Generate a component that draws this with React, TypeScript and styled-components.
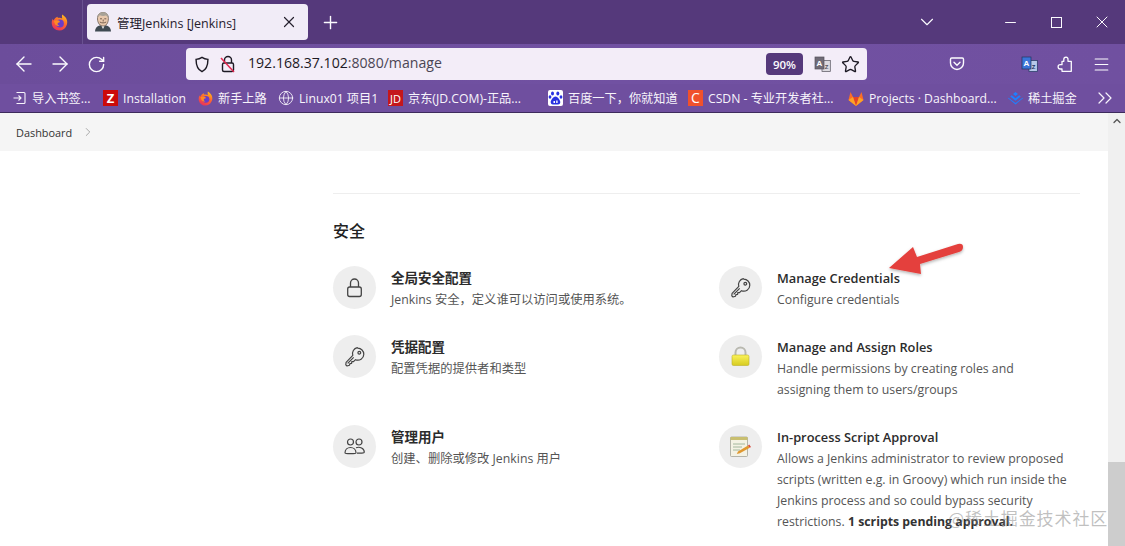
import React from "react";
import styled, { createGlobalStyle } from "styled-components";
import { ArrowLeft, ArrowRight, RotateCw, Plus, X, ChevronDown, ChevronRight, ChevronUp, ChevronsRight, Minus, Star, Menu, Globe } from "lucide-react";

const Global = createGlobalStyle`
  html, body { margin: 0; padding: 0; width: 1125px; height: 546px; overflow: hidden; background: #fff; }
  body { font-family: "Open Sans", "Noto Sans CJK SC", sans-serif; }
  * { box-sizing: border-box; }
`;

const Page = styled.div`
  position: relative; width: 1125px; height: 546px; overflow: hidden;
  display: flex; flex-direction: column;
`;

const TabStrip = styled.div`
  height: 44px; flex: none; background: #55397b; display: flex; align-items: stretch; color: #fbfbfe;
`;
const PinnedTab = styled.div`
  width: 83px; display: flex; align-items: center; justify-content: center; padding-left: 37px;
  border-right: 1px solid #6a5290;
`;
const Tab = styled.div`
  margin: 4px 0 4px 4px; width: 221px; height: 36px; border-radius: 4px; background: #f1ecf7; color: #26212e;
  display: flex; align-items: center; padding: 0 10px 0 8px; gap: 6px;
`;
const TabTitle = styled.span` flex: 1; white-space: nowrap; font-size: 12.5px; `;
const NewTab = styled.div` width: 44px; display: flex; align-items: center; justify-content: center; `;
const Spacer = styled.div` flex: 1; `;
const WinBtn = styled.div`
  width: 46px; display: flex; align-items: center; justify-content: center;
  margin-right: ${p => p.$mr ?? 0}px;
`;

const ToolBar = styled.div`
  height: 40px; flex: none; background: linear-gradient(90deg, #6c4d9b, #7151a2 55%, #7050a0); display: flex; align-items: center; color: #fbfbfe; padding-left: 6px;
`;
const NavBtn = styled.div`
  width: 36px; height: 32px; display: flex; align-items: center; justify-content: center; flex: none;
`;
const UrlBar = styled.div`
  margin-left: 72px; width: 681px; height: 32px; border-radius: 4px; background: #f3edf8; color: #1d1a24;
  display: flex; align-items: center; padding: 0 7px 0 8px; flex: none;
`;
const LockSlot = styled.div` margin-left: 10px; display: flex; `;
const UrlText = styled.div` flex: 1; font-size: 14.1px; margin-left: 12px; padding-bottom: 3px; white-space: nowrap; `;
const UrlHost = styled.span` color: #4b4654; `;
const ZoomBadge = styled.div`
  width: 37px; height: 22px; background: #55397b; color: #fbfbfe; border-radius: 4px; font-size: 11.5px; font-weight: 600;
  display: flex; align-items: center; justify-content: center; margin-right: 11px;
`;
const UrlIcons = styled.div` display: flex; align-items: center; gap: 10px; `;
const ToolRight = styled.div`
  margin-left: 72px; display: flex; align-items: center;
`;
const ToolGap = styled.div` width: 36px; `;

const BookBar = styled.div`
  height: 29px; flex: none; background: #6f4f9f; border-bottom: 1px solid #3d2a5c; display: flex; align-items: center; color: #f7f4fb;
  font-size: 12.2px; padding: 0 0 0 12px;
`;
const Bookmark = styled.div`
  display: flex; align-items: center; gap: 5px; white-space: nowrap; flex: none; width: ${p => p.$w}px;
`;
const FavSquare = styled.div`
  width: 15px; height: 16px; background: ${p => p.$bg}; color: #fff; font-size: ${p => p.$fs ?? 11}px; font-weight: ${p => p.$fw ?? 700};
  display: flex; align-items: center; justify-content: center; flex: none; line-height: 1;
`;
const MoreBtn = styled.div` margin-left: auto; margin-right: 8px; display: flex; `;

const Body = styled.div` flex: 1; display: flex; min-height: 0; `;
const Viewport = styled.div` flex: 1; display: flex; flex-direction: column; min-width: 0; `;
const Crumbs = styled.div`
  height: 38px; flex: none; background: #f5f5f5; display: flex; align-items: center; padding: 0 0 0 16px; gap: 9px; font-size: 10.9px; color: #333;
`;
const CrumbArrow = styled.span` color: #888; display: flex; `;
const Content = styled.div` flex: 1; background: #fff; padding: 42px 28px 0 333px; `;
const Rule = styled.div` height: 1px; background: #eeeeee; `;
const Heading = styled.h2`
  margin: 26px 0 24px; font-size: 16px; line-height: 22px; font-weight: 500; color: #222;
`;
const Grid = styled.div`
  display: grid; grid-template-columns: 386px 1fr;
`;
const Item = styled.div`
  display: flex; gap: 15px; padding-bottom: 25px; align-items: flex-start;
`;
const IconCircle = styled.div`
  width: 43px; height: 43px; border-radius: 50%; background: #eeeeee; display: flex; align-items: center; justify-content: center; flex: none; color: #444;
`;
const Text = styled.div` padding-top: 2px; width: 291px; `;
const Title = styled.div`
  font-size: ${p => (p.$cjk ? 13.5 : 12.8)}px; line-height: 21px; font-weight: 600; color: #2b2b2b; white-space: nowrap;
`;
const Desc = styled.div` font-size: 12.3px; line-height: 21px; color: #555; `;
const Strong = styled.b` font-weight: 700; color: #333; `;

const Scrollbar = styled.div`
  width: 17px; background: #f0f0f0; display: flex; flex-direction: column; align-items: center;
`;
const ThumbUp = styled.div` height: 15px; display: flex; align-items: center; color: #555; `;
const Thumb = styled.div` margin-top: auto; height: 84px; width: 100%; background: #cdcdcd; `;

const ArrowOverlay = styled.svg` position: absolute; left: 880px; top: 236px; `;
const Watermark = styled.div`
  position: absolute; left: 948px; top: 505px; font-size: 17px; color: rgba(130,130,130,.5); white-space: nowrap; letter-spacing: .9px;
  font-family: "Noto Sans CJK SC", sans-serif;
`;

const Firefox = ({ s = 17, id = "ff" }: { s?: number; id?: string }) => (
  <svg width={s} height={s} viewBox="0 0 16 16">
    <defs>
      <linearGradient id={id} x1="0.8" y1="0" x2="0.3" y2="1">
        <stop offset="0" stopColor="#ffc21a" />
        <stop offset=".45" stopColor="#ff6a2c" />
        <stop offset="1" stopColor="#e8305e" />
      </linearGradient>
    </defs>
    <path d="M10.500.5c1.800 1.200 3.200 2.400 4 4 1 2 1.100 4.700-.1 6.800a7.300 7.300 0 0 1-6.500 4.200C4 15.500.9 12.700.7 8.700.6 7.200 1 5.800 1.800 4.500c0 .8.200 1.300.6 1.700.8-2 2.300-3.200 4-3.700-.2.500-.2.900 0 1.200 1.600-.1 3-.2 4.100.6-.3-1.300-.4-2.600 0-3.800z" fill={`url(#${id})`} />
    <circle cx="8.400" cy="8.900" r="3.700" fill="#6a3dc8" />
    <path d="M2.600 6.400c1.500-.4 3.300-.8 4.600-.2.900.4 1.300 1 1 1.500-.6.300-1.400.3-1.900 1-.4.900.3 1.900 1.600 2.300-1.800.6-3.700-.3-4.400-2-.3-.8-.4-1.700-.9-2.600z" fill="#ff8a24" />
  </svg>
);

const Jenkins = () => (
  <svg width="16" height="20" viewBox="0 0 16 20">
    <path d="M0 19.500c0-3.500 2-5 4.500-6h7c2.500 1 4.500 2.500 4.500 6z" fill="#3f4a52" />
    <path d="M6 13l2 4 2-4z" fill="#f3f3f3" />
    <path d="M2.500 7C2.300 2.500 5 .5 8.200.5c3 0 5.300 2.200 5.200 6-.1 4.500-2 7.500-5.300 7.500S2.700 11 2.500 7z" fill="#e8c8ac" stroke="#59493c" strokeWidth=".7" />
    <path d="M2.400 7c-.4-5 3-6.800 5.800-6.800 3 0 5.700 2 5.300 6.600-.9-2-1.700-3-2.700-3.300-2 .6-4 .5-6-.2C3.600 4.200 3 5.400 2.400 7z" fill="#a8a297" />
    <path d="M4.800 10c2 1.200 4.400 1.200 6.400 0M5 6.800h2M9.300 6.800h2M8.200 7.500v2" stroke="#5a4638" strokeWidth=".8" fill="none" />
  </svg>
);

const Shield = () => (
  <svg width="16" height="17" viewBox="0 0 17 18" fill="none" stroke="#1d1a24" strokeWidth="1.5">
    <path d="M8.500 1.500c2 1.300 4 1.900 6.300 2.100 0 6-1.300 10.500-6.300 13C3.500 14.100 2.200 9.600 2.200 3.600 4.500 3.400 6.500 2.800 8.500 1.500z" />
  </svg>
);

const InsecureLock = () => (
  <svg width="16" height="18" viewBox="0 0 16 18" fill="none">
    <path d="M4.500 8V5a3.500 3.500 0 0 1 7 0v3" stroke="#1d1a24" strokeWidth="1.400" />
    <rect x="2.500" y="8" width="11" height="8.500" rx="1.500" stroke="#1d1a24" strokeWidth="1.400" />
    <path d="M1 3l13 14" stroke="#e22850" strokeWidth="1.500" />
  </svg>
);

const MaximizeIcon = () => (
  <svg width="11" height="11" viewBox="0 0 11 11" fill="none" stroke="#fbfbfe" strokeWidth="1">
    <rect x=".5" y=".5" width="10" height="10" />
  </svg>
);

const GlyphA = styled.text` font-family: "Liberation Sans", sans-serif; font-weight: 700; font-size: 8px; `;
const GlyphB = styled.text` font-family: "Liberation Sans", sans-serif; font-weight: 700; font-size: 6px; `;

const TranslateBadge = ({ back, front, stroke, ink }: { back: string; front: string; stroke: string; ink: string }) => (
  <svg width="17" height="17" viewBox="0 0 17 17">
    <rect x="8" y="4.500" width="8.300" height="11" fill={front} stroke={stroke} strokeWidth=".7" />
    <rect x="1" y="1" width="9" height="12" fill={back} stroke={stroke} strokeWidth=".7" />
    <GlyphA x="2.600" y="10" fill="#fff">A</GlyphA>
    <GlyphB x="10.800" y="13" fill={ink}>Z</GlyphB>
  </svg>
);

const Pocket = () => (
  <svg width="16" height="16" viewBox="0 0 16 16" fill="none" stroke="#fbfbfe" strokeWidth="1.400">
    <path d="M2.700 2h10.600c.7 0 1.200.5 1.200 1.200V7A6.500 6.500 0 0 1 1.500 7V3.200C1.500 2.500 2 2 2.700 2z" />
    <path d="M5 6.300l3 3 3-3" strokeLinecap="round" />
  </svg>
);

const PuzzlePiece = () => (
  <svg width="16" height="16" viewBox="0 0 16 16" fill="none" stroke="#fbfbfe" strokeWidth="1.300" strokeLinejoin="round">
    <path d="M14.300 5.300H11V3.500A2.300 2.300 0 0 0 9 1.100C7.700 1.200 6.800 2.200 6.800 3.500v1.800H5v3.400H3.300c-1.200 0-2.200 1-2.200 2.100s1 2.200 2.200 2.200H5v2.300h9.300z" />
  </svg>
);

const ImportIcon = () => (
  <svg width="15" height="14" viewBox="0 0 14 14" fill="none" stroke="#f7f4fb" strokeWidth="1.100">
    <path d="M4 1.500h7.500a1 1 0 0 1 1 1v9a1 1 0 0 1-1 1H4" />
    <path d="M1 7h7M6 4.500L8.500 7 6 9.500" />
  </svg>
);

const Paw = () => (
  <svg width="15" height="16" viewBox="0 0 15 16">
    <rect width="15" height="16" rx="2" fill="#fff" />
    <ellipse cx="4.500" cy="3.600" rx="1.500" ry="2" fill="#2932e1" />
    <ellipse cx="9.800" cy="3.600" rx="1.500" ry="2" fill="#2932e1" />
    <ellipse cx="13" cy="7" rx="1.400" ry="1.800" fill="#2932e1" />
    <ellipse cx="2" cy="7" rx="1.400" ry="1.800" fill="#2932e1" />
    <path d="M7.500 6.500c2 0 4.800 3.500 4.800 5.700 0 2.300-2.800 2.500-4.800 2.300-2 .2-4.800 0-4.800-2.300 0-2.200 2.800-5.700 4.800-5.700z" fill="#2932e1" />
    <path d="M5.500 11h1.500v2h-1.500zM8.200 10.500h1.400v2.600H8.200z" fill="#fff" />
  </svg>
);

const Gitlab = () => (
  <svg width="16" height="15" viewBox="0 0 16 15">
    <path d="M8 15L.5 9 2.500 1 5 6h6l2.500-5 2 8z" fill="#fc6d26" />
    <path d="M8 15L5 6h6z" fill="#e24329" />
    <path d="M8 15L.5 9 5 6zM8 15l7.500-6L11 6z" fill="#fca326" />
  </svg>
);

const Juejin = () => (
  <svg width="15" height="13" viewBox="0 0 15 13" fill="#1e80ff">
    <path d="M7.500 0L10 2 7.500 4 5 2z" />
    <path d="M3.800 3.200l3.700 3 3.700-3 1.600 1.300-5.300 4.200-5.300-4.200z" />
    <path d="M.5 5.700l7 5.400 7-5.400 .6.500-7.600 6.300L-.1 6.200z" />
  </svg>
);

const LockIcon = () => (
  <svg width="17" height="21" viewBox="0 0 17 21" fill="none" stroke="#444" strokeWidth="1.300">
    <path d="M4.500 10V6a4 4 0 0 1 8 0v4" />
    <rect x="1.700" y="10" width="13.600" height="9.500" rx="2" />
  </svg>
);

const KeyIcon = () => (
  <svg width="20" height="20" viewBox="0 0 20 20" fill="none" stroke="#444" strokeWidth="1.200" strokeLinejoin="round">
    <path d="M12.800 1.200a6 6 0 0 1 6 6 6 6 0 0 1-8.300 5.500l-2 2-1.700-.1-.2 1.800-1.700.3-.4 1.500-2.500.8-1.200-1.200.3-2.500 6.700-6.900a6 6 0 0 1 4.500-7.700z" />
    <circle cx="14.300" cy="5.700" r="1.400" />
    <path d="M2.700 16.300l6-6" />
  </svg>
);

const UsersIcon = () => (
  <svg width="21" height="17" viewBox="0 0 21 17" fill="none" stroke="#444" strokeWidth="1.200">
    <circle cx="6.500" cy="4" r="3" />
    <circle cx="15" cy="4" r="3" />
    <path d="M1 15c0-3.500 2.500-5.500 5.500-5.500s5.500 2 5.500 5.500c0 1-11 1-11 0z" />
    <path d="M12 9.700c3.800-1.300 8.300.5 8.300 4.500 0 1-4 1-7.300 .9" />
  </svg>
);

const YellowLock = () => (
  <svg width="19" height="21" viewBox="0 0 19 21">
    <defs>
      <linearGradient id="yl" x1="0" y1="0" x2="0" y2="1">
        <stop offset="0" stopColor="#fbf35a" />
        <stop offset="1" stopColor="#d6cb20" />
      </linearGradient>
    </defs>
    <path d="M4.500 10V6.500a5 5 0 0 1 10 0V10" fill="none" stroke="#b9b9b0" strokeWidth="2" />
    <rect x="1" y="9" width="17" height="10.500" rx="1.500" fill="url(#yl)" stroke="#bdb225" strokeWidth=".6" />
  </svg>
);

const Notepad = () => (
  <svg width="23" height="22" viewBox="0 0 23 22">
    <rect x="1.500" y="1" width="17" height="19.500" rx="1" fill="#f4f2e4" stroke="#a5a598" strokeWidth=".8" />
    <rect x="1.500" y="1" width="17" height="3" fill="#c9bf70" />
    <path d="M4 8h12M4 11h9M4 14h7" stroke="#8fa88a" strokeWidth=".8" />
    <path d="M9 15.500l10-6 1.800 2.300-10 5.500-3 .8z" fill="#e0982f" />
    <path d="M19 9.500l1.800 2.300 1.200-.9-1.800-2.400z" fill="#d9483c" />
  </svg>
);

const Arrow = () => (
  <ArrowOverlay width="90" height="50" viewBox="0 0 90 50">
    <defs>
      <filter id="sh" x="-20%" y="-20%" width="140%" height="150%">
        <feDropShadow dx="0" dy="1.500" stdDeviation="1.500" floodColor="#000" floodOpacity=".3" />
      </filter>
    </defs>
    <path d="M9 32 L33 11 L37 21 L78 8 Q83 7 83 11 Q83 15 79 16 L40 28 L41 38 Z" fill="#e4403c" filter="url(#sh)" />
  </ArrowOverlay>
);

const rows = [
  { icon: <LockIcon />, cjk: true, title: "全局安全配置", desc: "Jenkins 安全\uFF0C定义谁可以访问或使用系统。" },
  { icon: <KeyIcon />, title: "Manage Credentials", desc: "Configure credentials" },
  { icon: <KeyIcon />, cjk: true, title: "凭据配置", desc: "配置凭据的提供者和类型" },
  { icon: <YellowLock />, title: "Manage and Assign Roles", desc: "Handle permissions by creating roles and assigning them to users/groups" },
  { icon: <UsersIcon />, cjk: true, title: "管理用户", desc: "创建、删除或修改 Jenkins 用户" },
  {
    icon: <Notepad />,
    title: "In-process Script Approval",
    desc: (
      <>
        Allows a Jenkins administrator to review proposed scripts (written e.g. in Groovy) which run inside the Jenkins process and so could bypass security restrictions. <Strong>1 scripts pending approval.</Strong>
      </>
    ),
  },
];

export default function App() {
  return (
    <Page>
      <Global />
      <TabStrip>
        <PinnedTab><Firefox /></PinnedTab>
        <Tab>
          <Jenkins />
          <TabTitle>管理Jenkins [Jenkins]</TabTitle>
          <X size={18} strokeWidth={1.6} />
        </Tab>
        <NewTab><Plus size={21} strokeWidth={1.6} /></NewTab>
        <Spacer />
        <WinBtn $mr={37}><ChevronDown size={22} strokeWidth={1.2} /></WinBtn>
        <WinBtn><Minus size={17} strokeWidth={1.4} /></WinBtn>
        <WinBtn><MaximizeIcon /></WinBtn>
        <WinBtn><X size={20} strokeWidth={1.2} /></WinBtn>
      </TabStrip>
      <ToolBar>
        <NavBtn><ArrowLeft size={24} strokeWidth={1.4} /></NavBtn>
        <NavBtn><ArrowRight size={24} strokeWidth={1.4} /></NavBtn>
        <NavBtn><RotateCw size={19} strokeWidth={1.8} /></NavBtn>
        <UrlBar>
          <Shield />
          <LockSlot><InsecureLock /></LockSlot>
          <UrlText>192.168.37.102<UrlHost>:8080/manage</UrlHost></UrlText>
          <ZoomBadge>90%</ZoomBadge>
          <UrlIcons>
            <TranslateBadge back="#6f6b76" front="#dcdae0" stroke="#55525c" ink="#55525c" />
            <Star size={19} strokeWidth={1.7} color="#1d1a24" />
          </UrlIcons>
        </UrlBar>
        <ToolRight>
          <NavBtn><Pocket /></NavBtn>
          <ToolGap />
          <NavBtn><TranslateBadge back="#3b74d8" front="#b7c9ea" stroke="#20355f" ink="#20355f" /></NavBtn>
          <NavBtn><PuzzlePiece /></NavBtn>
          <NavBtn><Menu size={19} strokeWidth={1.4} /></NavBtn>
        </ToolRight>
      </ToolBar>
      <BookBar>
        <Bookmark $w={91}><ImportIcon />导入书签...</Bookmark>
        <Bookmark $w={95}><FavSquare $bg="#cc0a0a" $fs={13}>Z</FavSquare>Installation</Bookmark>
        <Bookmark $w={80}><Firefox s={15} id="ff2" />新手上路</Bookmark>
        <Bookmark $w={110}><Globe size={16} strokeWidth={1.3} />Linux01 项目1</Bookmark>
        <Bookmark $w={160}><FavSquare $bg="#c4161c" $fs={11} $fw={400}>JD</FavSquare>京东(JD.COM)-正品...</Bookmark>
        <Bookmark $w={140}><Paw />{"百度一下\uFF0C你就知道"}</Bookmark>
        <Bookmark $w={160}><FavSquare $bg="#f0512c" $fs={14} $fw={400}>C</FavSquare>CSDN - 专业开发者社...</Bookmark>
        <Bookmark $w={160}><Gitlab />Projects · Dashboard...</Bookmark>
        <Bookmark $w={80}><Juejin />稀土掘金</Bookmark>
        <MoreBtn><ChevronsRight size={24} strokeWidth={1.2} /></MoreBtn>
      </BookBar>
      <Body>
        <Viewport>
          <Crumbs>
            Dashboard
            <CrumbArrow><ChevronRight size={14} strokeWidth={1.2} /></CrumbArrow>
          </Crumbs>
          <Content>
            <Rule />
            <Heading>安全</Heading>
            <Grid>
              {rows.map((r, i) => (
                <Item key={i}>
                  <IconCircle>{r.icon}</IconCircle>
                  <Text>
                    <Title $cjk={r.cjk}>{r.title}</Title>
                    <Desc>{r.desc}</Desc>
                  </Text>
                </Item>
              ))}
            </Grid>
          </Content>
        </Viewport>
        <Scrollbar>
          <ThumbUp><ChevronUp size={12} strokeWidth={2.6} /></ThumbUp>
          <Thumb />
        </Scrollbar>
      </Body>
      <Arrow />
      <Watermark>@稀土掘金技术社区</Watermark>
    </Page>
  );
}
